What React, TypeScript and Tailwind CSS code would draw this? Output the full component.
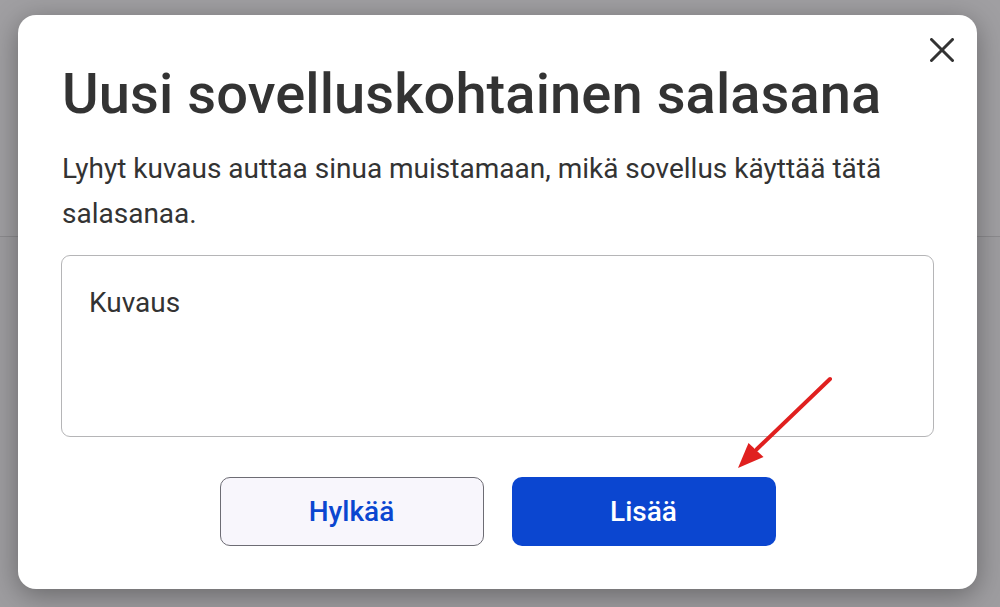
import React from 'react';

const font = { fontFamily: 'Roboto, "Noto Sans", Arial, sans-serif' };

const CloseIcon: React.FC = () => (
  <svg width="24" height="24" viewBox="0 0 24 24" fill="none" stroke="#333333" strokeWidth="3" strokeLinecap="round">
    <path d="M1.5 1.5 22.5 22.5" />
    <path d="M22.5 1.5 1.5 22.5" />
  </svg>
);

const Arrow: React.FC = () => (
  <svg className="absolute left-0 top-0 pointer-events-none" width="1000" height="607" viewBox="0 0 1000 607">
    <line x1="830" y1="379" x2="757" y2="449" stroke="#e0201f" strokeWidth="4" strokeLinecap="round" />
    <polygon points="738,468 763.5,457 748.5,443" fill="#e0201f" />
  </svg>
);

export default function App() {
  return (
    <div className="relative w-[1000px] h-[607px] overflow-hidden bg-[#9e9da0]" style={font}>
      {/* page behind the dialog */}
      <div className="h-[237px] border-b border-[#8c8b8e] bg-[#a09fa2]" />

      <div className="absolute left-[18px] top-[15px] w-[959px] h-[574px] rounded-[18px] bg-white px-[43px] pt-[46px] shadow-[0_6px_28px_rgba(0,0,0,0.35)]">
        <button className="absolute left-[912px] top-[23px] w-[24px] h-[24px] flex items-center justify-center">
          <CloseIcon />
        </button>

        <h2 className="pl-[1px] text-[56px] leading-[66px] font-medium text-[#333333] tracking-[0.1px]">
          Uusi sovelluskohtainen salasana
        </h2>

        <p className="mt-[19px] pl-[1px] text-[28px] leading-[45px] text-[#333333]">
          Lyhyt kuvaus auttaa sinua muistamaan, mikä sovellus käyttää tätä salasanaa.
        </p>

        <div className="mt-[19px] h-[182px] rounded-[9px] border-[1.5px] border-[#b5b5b7] pl-[27px] pt-[31px]">
          <div className="text-[28px] leading-[32px] text-[#333333]">Kuvaus</div>
        </div>

        <div className="mt-[40px] flex justify-center gap-[28px]">
          <button className="w-[264px] h-[69px] rounded-[10px] border-[1.5px] border-[#6d6c74] bg-[#f8f6fc] text-[28px] font-medium text-[#0b46d0]">
            Hylkää
          </button>
          <button className="w-[264px] h-[69px] rounded-[10px] bg-[#0b46d0] text-[28px] font-medium text-white">
            Lisää
          </button>
        </div>
      </div>

      <Arrow />
    </div>
  );
}
